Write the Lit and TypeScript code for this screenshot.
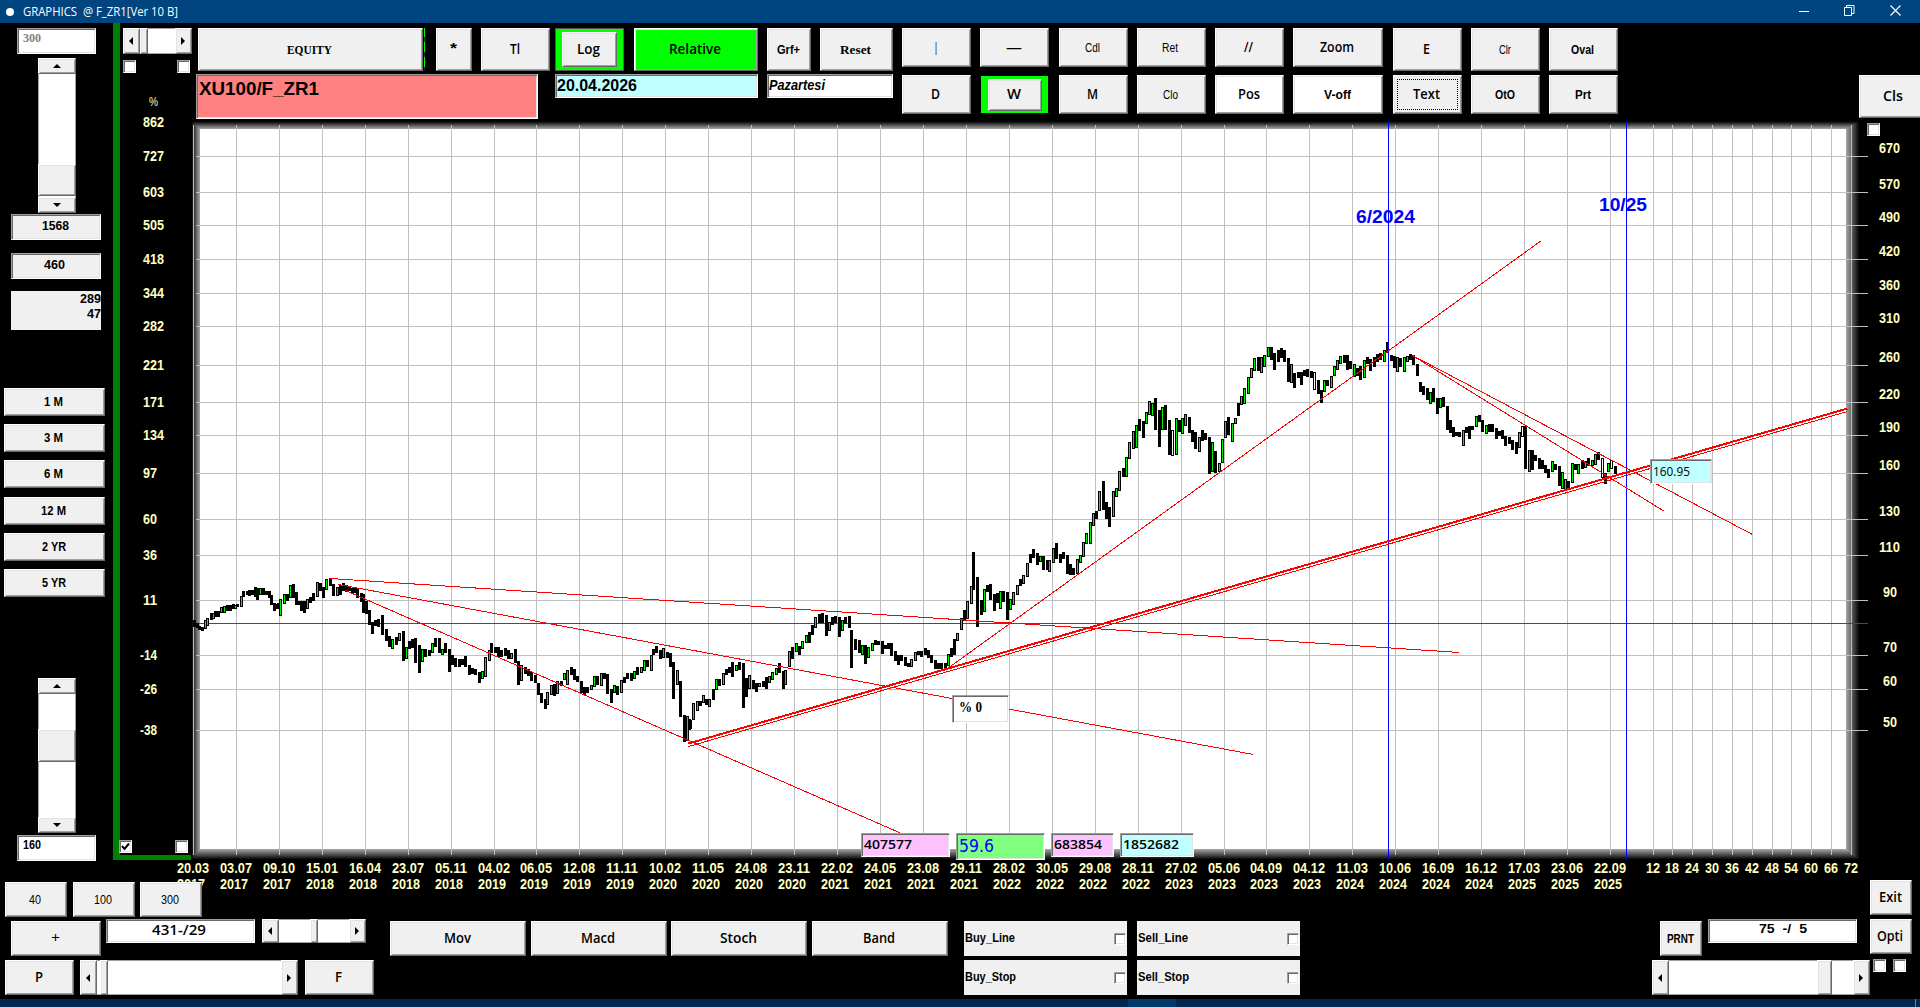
import { LitElement, html, svg, css } from "lit";
import { customElement, property } from "lit/decorators.js";

type Font = "sans" | "ui" | "serif" | "wide";

/** Label whose text is set to an exact width, as the fixed-size form fonts do. */
const label = (text: string, width: number, size = 14, font: Font = "ui", weight = 600, extra = "") => html`
  <svg class="lbl ${font} ${extra}" width=${width} height=${Math.round(size * 1.2)}>
    <text x="0" y=${Math.round(size * 0.95)} font-size=${size} font-weight=${weight}
      textLength=${width} lengthAdjust="spacingAndGlyphs" xml:space="preserve">${text}</text>
  </svg>`;

const base = css`
  * { box-sizing: border-box; }
  .lbl { display: block; flex: none; overflow: visible; fill: currentColor; }
  .sans { font-family: "Liberation Sans", Arial, sans-serif; }
  .ui { font-family: "Open Sans", "Noto Sans", sans-serif; }
  .wide { font-family: "DejaVu Sans", sans-serif; }
  .serif { font-family: "Liberation Serif", serif; }
  .italic { font-style: italic; }
  .raised {
    background: #f0f0f0;
    border: 1px solid; border-color: #fff #696969 #696969 #fff;
    box-shadow: inset 1px 1px #e3e3e3, inset -1px -1px #a0a0a0;
  }
  .sunken {
    background: #fff;
    border: 1px solid; border-color: #a0a0a0 #fff #fff #a0a0a0;
    box-shadow: inset 1px 1px #696969, inset -1px -1px #e3e3e3;
  }
`;

@customElement("scroll-bar")
class ScrollBar extends LitElement {
  @property({ type: Boolean, reflect: true }) vertical = false;
  @property({ type: Number }) before = 0;
  @property({ type: Number }) thumb = 8;
  static styles = [base, css`
    :host { display: flex; background: #fff; flex: none; box-sizing: border-box; box-shadow: inset 0 1px #a0a0a0, inset 0 -1px #a0a0a0; }
    :host([vertical]) { flex-direction: column; box-shadow: inset 1px 0 #a0a0a0, inset -1px 0 #a0a0a0; }
    .arrow { flex: 0 0 17px; display: flex; align-items: center; justify-content: center; padding-right: 1px; }
    :host([vertical]) .arrow { flex-basis: 16px; }
    .gap { flex: none; }
    .fill { flex: 1; }
    .thumb { flex: none; }
    .arrow svg { display: block; }
  `];
  render() {
    const v = this.vertical;
    const size = (n: number) => `flex-basis:${n}px`;
    const a = v ? "M4 0L8 4H0Z" : "M4 0V8L0 4Z";
    const b = v ? "M0 0H8L4 4Z" : "M0 0V8L4 4Z";
    const arrow = (d: string) => html`<div class="arrow raised">
      <svg width=${v ? 8 : 4} height=${v ? 4 : 8}><path d=${d} fill="#000"/></svg></div>`;
    return html`${arrow(a)}<div class="gap" style=${size(this.before)}></div>
      <div class="thumb raised" style=${size(this.thumb)}></div><div class="fill"></div>${arrow(b)}`;
  }
}

/* Weekly candles: x, high, low in thirds of a pixel from the segment origin; "g" marks a rising week, "w" a hollow one. */
const SEGMENTS: [number, number, string][] = [
  [190, 570, "12,150,170 20,158,174 28,168,180 36,170,182 44,150,176g 52,144,168g 62,128,150 70,130,146g 76,122,142 84,124,142 92,112,130g 102,108,128g 110,106,124 120,104,124 130,102,118 134,104,118g 142,102,110 152,78,110g 160,64,80 170,62,74 178,60,78 186,60,74 194,52,80 202,54,90 211,55,76g 220,54,74 228,62,76 238,64,84 244,74,106 252,98,122 260,102,116 264,98,112 271,86,138g 281,72,102g 290,72,94 300,46,84g 310,42,84 318,66,104 328,94,106 334,92,122 343,94,130 350,88,118g 360,82,98 370,68,94 380,36,80g 390,40,62 400,52,84 409,26,60g 420,24,48 430,42,78 440,50,78g 450,46,76 460,40,62 468,44,66 478,48,64 486,54,70 496,54,70 502,56,84 512,70,96 519,72,128 529,92,132 538,120,164 546,156,192 556,150,168 564,148,172 576,134,194 587,178,214 597,198,230 607,206,236g 617,202,224 628,188,212g 638,182,272 647,230,266g 658,212,238 667,208,234 676,204,278 686,226,308 696,236,276g 706,238,262 716,240,258 726,218,250g 736,204,232 746,204,250 756,236,256g 766,220,250 776,236,306 786,256,284 796,264,290 806,268,292 816,266,284 826,258,290 836,284,316 846,294,312 856,298,316 866,306,340 876,304,326g 886,260,320g 896,240,272g 904,218,248 914,232,250 924,230,262 934,240,260 944,234,258 954,240,266 964,250,268g 974,236,280 984,272,346 994,286,334g 1004,290,312 1014,296,318 1024,306,332 1034,314,338 1044,338,376 1054,370,398 1064,388,416 1072,366,404g 1082,344,374g 1092,342,378 1102,334,372g 1112,334,348 1122,310,330g 1132,300,344g 1142,292,314 1152,298,330 1162,318,336 1172,332,370 1182,352,376 1192,350,370 1202,344,360g 1212,318,350g 1222,318,344 1232,310,348g 1242,308,326 1252,312,372 1262,356,398 1272,344,368g 1282,348,374 1292,330,370g 1302,322,340 1312,308,326 1322,308,334 1332,302,326g 1342,292,314 1352,290,308g 1362,270,302g 1372,270,290 1382,254,304g 1390,236,256 1399,228,250 1410,240,266 1420,234,264g 1430,246,264 1440,250,290 1450,276,386 1460,300,344g 1470,334,440 1481,434,516 1490,438,512g 1498,448,480g"],
  [680, 390, "30,990,1018 40,940,990g 50,932,964g 60,934,948 70,914,938g 78,926,944 88,926,950g 98,896,930 108,866,900g 118,866,888 128,848,884g 138,838,856 148,830,850 157,816,860 168,824,842g 178,816,840 188,818,954 197,864,920 208,856,896g 218,870,898 227,880,906 238,878,892g 248,872,890 257,862,896 267,858,880g 277,846,870g 287,834,856g 297,820,848 308,842,896 316,840,886g 326,782,830g 337,770,806 347,758,786g 357,768,796 367,754,776g 377,734,758g 386,726,760 396,706,734 406,680,714g 416,672,698 427,670,698 437,674,738 446,696,722g 456,682,704 466,678,700 476,682,740 486,690,722g 496,682,702 506,678,714 514,720,834 526,748,780 536,750,790 546,766,794g 555,764,822 565,772,804g 575,758,782g 585,750,766 595,752,766 605,754,792 615,766,778 625,760,778 634,760,798 644,784,814 654,796,824 664,794,812 674,802,828 684,820,832 694,806,832g 704,786,812g 714,784,796 724,782,800 734,774,794 744,780,804 754,794,820 764,810,836 774,818,838 784,820,836 794,820,834 803,792,828g 812,774,800 822,748,794 832,728,754g 842,684,720g 852,660,692 862,632,686g 872,588,642g 880,486,600 892,560,712 902,630,676 911,598,666g 921,584,606 931,582,630 941,612,664 951,610,638 960,604,656g 970,604,636 980,606,690 990,626,660g 1000,606,646g 1010,586,614g 1020,568,588 1030,554,582g 1040,520,560g 1050,492,520 1060,478,504 1070,490,524 1080,498,516g 1090,498,540 1100,510,540 1108,510,546g 1120,474,518g 1129,458,508 1139,492,518 1149,486,508 1160,496,552 1170,522,554 1180,534,556 1190,508,552g 1200,496,518g 1208,456,500g 1219,430,462g 1229,396,462g 1238,368,408g 1248,362,388 1258,304,364g 1268,272,360 1278,336,386 1288,350,410 1298,304,382g 1307,294,322g 1318,242,302g 1328,234,262 1338,202,262g 1348,156,208g 1358,124,176g 1367,104,174g 1378,88,122 1388,94,144 1397,66,102g 1406,34,76g 1416,38,78g 1426,24,120 1436,60,170 1447,52,120g 1456,44,120 1466,90,194 1477,120,198w 1487,84,194g 1496,90,126"],
  [1170, 335, "36,248,298g 46,236,272g 56,246,294 66,286,320 76,292,342 86,306,352g 95,286,318 106,294,314 116,306,418 126,322,412g 136,348,414 146,384,412g 155,312,384g 165,258,310g 175,246,300 185,264,322g 194,248,268g 205,204,242 214,184,210g 223,160,206g 233,126,178g 243,98,130g 253,68,108g 263,66,108 274,66,114g 283,60,96g 293,36,66g 303,36,76 313,54,104 323,44,82 332,38,68 343,44,82 353,70,140 362,86,144g 373,114,160 383,110,130 392,112,150 402,104,124 412,102,126 422,108,128 432,112,166w 443,134,176 452,166,204 461,136,172g 471,134,152 482,122,158g 491,92,124g 501,76,104g 511,62,86g 521,60,84 531,60,104 541,78,102 551,88,126g 561,100,124 571,92,136 581,76,130g 591,66,86 601,72,108 611,66,96 621,56,82 631,54,74 641,44,82g 650,20,54 662,60,78 671,62,98 680,66,112g 690,68,96 701,66,112g 711,64,82g 720,58,76 730,60,90 740,88,124 750,140,172 760,154,180 770,160,196 780,172,206g 790,158,202 800,188,236 810,190,218g 820,186,216 830,212,284 840,256,294 849,276,306 859,290,304 868,290,306 878,284,332g 887,276,294 897,272,312 907,272,286 918,244,276g 927,240,262 937,254,290 947,270,296g 957,268,290 967,266,290 977,278,312 987,288,304 996,284,312 1006,302,332 1017,306,328 1027,316,344 1037,320,358 1046,290,338g 1056,272,306w 1066,274,402 1076,346,410g 1086,346,404 1096,360,378 1106,370,402 1116,374,402 1125,390,414 1135,402,428 1146,378,410g 1156,386,406 1166,394,452 1175,412,462g 1185,432,464g 1195,438,464 1205,384,444g 1215,386,404 1225,388,418g 1235,376,402 1245,378,398g 1255,370,392 1265,374,394g 1275,358,390g 1285,352,376 1295,370,428w 1304,414,446 1314,384,412g 1324,374,402w 1334,392,418"],
];
const CANDLES = SEGMENTS.flatMap(([ox, oy, data]) => data.split(" ").map((c) => {
  const kind = /[gw]$/.test(c) ? c.slice(-1) : "";
  const [x, h, l] = c.replace(/[gw]$/, "").split(",").map(Number);
  return { x: Math.round(ox + x / 3) - 1, top: Math.round(oy + h / 3), bottom: Math.round(oy + l / 3), kind };
}));

const DATES = "20.03.2017 03.07.2017 09.10.2017 15.01.2018 16.04.2018 23.07.2018 05.11.2018 04.02.2019 06.05.2019 12.08.2019 11.11.2019 10.02.2020 11.05.2020 24.08.2020 23.11.2020 22.02.2021 24.05.2021 23.08.2021 29.11.2021 28.02.2022 30.05.2022 29.08.2022 28.11.2022 27.02.2023 05.06.2023 04.09.2023 04.12.2023 11.03.2024 10.06.2024 16.09.2024 16.12.2024 17.03.2025 23.06.2025 22.09.2025".split(" ");
const DATE_X = DATES.map((_, i) => Math.round(i < 8 ? 193 + i * 43 : 536 + (i - 8) * 42.97));
const MONTH_X = [1653, 1672, 1692, 1712, 1732, 1752, 1772, 1791, 1811, 1831, 1851];
const ROWS: [number, string, string][] = [
  [156, "727", "670"], [192, "603", "570"], [225, "505", "490"], [259, "418", "420"], [293, "344", "360"],
  [326, "282", "310"], [365, "221", "260"], [402, "171", "220"], [435, "134", "190"], [473, "97", "160"],
  [519, "60", "130"], [555, "36", "110"], [600, "11", "90"], [655, "-14", "70"], [689, "-26", "60"], [730, "-38", "50"],
];
const TRENDS: [number, number, number, number, number][] = [
  [330, 578, 1459, 652, 1], [338, 584, 1253, 754, 1], [345, 590, 901, 833, 1], [947, 668, 1541, 240, 1],
  [688, 743, 1847, 408, 2], [688, 746, 1847, 411, 1], [1412, 355, 1752, 534, 1], [1412, 355, 1664, 511, 1],
];

@customElement("price-chart")
class PriceChart extends LitElement {
  static styles = [base, css`
    :host { display: block; position: relative; width: 1800px; height: 759px; }
    .plot { display: block; overflow: visible; font-family: "Liberation Sans", Arial, sans-serif; }
    .axis { fill: #ffffc0; font-size: 14px; font-weight: 600; }
    .note { fill: #00f; font-size: 18.5px; font-weight: 700; }
    .crisp { shape-rendering: crispEdges; }
    .over { position: absolute; color: #000; padding: 3px 0 0 2px; }
    .price { left: 1530px; top: 338px; width: 62px; height: 25px; background: #c0ffff; padding: 4px 0 0 2px; border-right-color: #e3e3e3; border-bottom-color: #fff; }
    .pct { left: 832px; top: 574px; width: 57px; height: 28px; padding: 2px 0 0 6px; }
    .b1 { left: 741px; top: 712px; width: 89px; height: 24px; background: #ffc0ff; }
    .b2 { left: 836px; top: 712px; width: 89px; height: 27px; background: #80ff80; color: #00f; padding-top: 2px; }
    .b3 { left: 931px; top: 712px; width: 63px; height: 24px; background: #ffc0ff; }
    .b4 { left: 1000px; top: 712px; width: 74px; height: 24px; background: #c0ffff; }
    .check { position: absolute; width: 13px; height: 13px; }
    .c1 { left: -1px; top: 719px; }
    .c2 { left: 55px; top: 719px; }
    .c3 { left: 1747px; top: 2px; }
  `];
  private txt(t: string, x: number, y: number, w: number, cls = "axis") {
    return svg`<text class=${cls} x=${x} y=${y} textLength=${w} lengthAdjust="spacingAndGlyphs">${t}</text>`;
  }
  private frame() {
    const n = 11;
    return Array.from({ length: n }, (_, i) => {
      const c = Math.round((i / (n - 1)) * 160);
      const k = i / n;
      const l = 191 + 9 * k, t = 121 + 8 * k, r = 1860 - 14 * k, b = 860 - 11 * k;
      return svg`<rect x=${l} y=${t} width=${r - l} height=${b - t} fill="rgb(${c},${c},${c})"/>`;
    });
  }
  render() {
    return html`<svg class="plot" width="1800" height="759" viewBox="120 121 1800 759">
      ${this.frame()}
      <g class="crisp">
        <rect x="200" y="129" width="1646" height="720" fill="#fff"/>
        <rect x="193" y="125" width="1" height="730" fill="#c0c0c0"/>
        ${[...DATE_X.slice(1), ...MONTH_X].map((x) => svg`<rect x=${x} y="125" width="1" height="730" fill="#c0c0c0"/>`)}
        ${ROWS.map(([y]) => svg`<rect x="196" y=${y} width="1672" height="1" fill="#c0c0c0"/>`)}
        <rect x="196" y="623" width="1672" height="1" fill="#f00"/>
        ${CANDLES.map((c) => {
          const h = Math.max(2, c.bottom - c.top);
          return svg`<rect x=${c.x} y=${c.top} width="3" height=${h} fill="#000"/>${c.kind && h > 2
            ? svg`<rect x=${c.x + 1} y=${c.top + 1} width="1" height=${h - 2} fill=${c.kind === "g" ? "#00f000" : "#fff"}/>` : ""}`;
        })}
        <rect x="1388" y="121" width="1" height="739" fill="#00f"/>
        <rect x="1626" y="121" width="1" height="739" fill="#00f"/>
        ${TRENDS.map(([a, b, c, d, w]) => svg`<line x1=${a + 0.5} y1=${b + 0.5} x2=${c + 0.5} y2=${d + 0.5} stroke="#f00" stroke-width=${w}/>`)}
      </g>
      ${this.txt("862", 143, 127, 21)}
      ${ROWS.map(([y, l, r]) => svg`
        ${this.txt(l, l[0] === "-" ? 140 : 143, y + 5, l[0] === "-" ? 17 : l.length * 7)}
        ${this.txt(r, r.length === 3 ? 1879 : 1883, y - 3, r.length * 7)}`)}
      ${DATES.map((d, i) => svg`
        ${this.txt(d.slice(0, 5), DATE_X[i] - 16, 873, 32)}
        ${this.txt(d.slice(6), DATE_X[i] - 16, 889, 28)}`)}
      ${MONTH_X.map((x, i) => this.txt(String(12 + i * 6), x - 7, 873, 14))}
      ${this.txt("6/2024", 1356, 223, 59, "note")}
      ${this.txt("10/25", 1599, 211, 48, "note")}
    </svg>
    <div class="over sunken price">${label("160.95", 37, 13, "ui", 400)}</div>
    <div class="over sunken pct">${label("% 0", 23, 15, "serif", 700)}</div>
    <div class="over sunken b1">${label("407577", 48, 13, "ui", 600)}</div>
    <div class="over sunken b2">${label("59.6", 35, 17, "wide", 400)}</div>
    <div class="over sunken b3">${label("683854", 48, 13, "ui", 600)}</div>
    <div class="over sunken b4">${label("1852682", 56, 13, "ui", 600)}</div>
    <div class="check sunken c1"><svg class="lbl" width="11" height="11"><path d="M2 5L4.5 8L9 2.5" fill="none" stroke="#000" stroke-width="2"/></svg></div>
    <div class="check sunken c2"></div>
    <div class="check sunken c3"></div>`;
  }
}

@customElement("app-root")
class AppRoot extends LitElement {
  static styles = [base, css`
    :host { display: flex; flex-direction: column; width: 1920px; height: 1007px; background: #000; overflow: hidden; color: #000; }
    .title { height: 23px; background: #004480; color: #fff; display: flex; align-items: center; padding: 0 19px 0 6px; flex: none; }
    .dot { width: 8px; height: 8px; border-radius: 50%; background: #fff; margin-right: 9px; }
    .wins { margin-left: auto; display: flex; gap: 35px; align-items: center; margin-top: -3px; }
    .wins svg { display: block; }
    .upper { display: flex; height: 857px; flex: none; }
    .btn { display: flex; align-items: center; justify-content: center; flex: none; padding-right: 2px; }
    .field { padding: 3px; flex: none; }
    .side { width: 113px; flex: none; display: flex; flex-direction: column; align-items: flex-start; padding-top: 5px; }
    .side > .num { width: 79px; height: 26px; margin-left: 17px; padding: 2px 0 0 5px; }
    .side > .num.low { margin-top: 2px; }
    .side > .read { width: 90px; height: 26px; margin: 1px 0 0 11px; background: #f0f0f0; display: flex; justify-content: center; padding: 3px 1px 0 0; }
    .side > .read.second { margin-top: 13px; padding-right: 3px; }
    .pair { width: 90px; height: 39px; background: #f0f0f0; margin: 12px 0 0 11px; display: flex; flex-direction: column; align-items: flex-end; }
    .pair .lbl + .lbl { margin-top: -1px; }
    .side scroll-bar { width: 38px; height: 155px; margin: 4px 0 0 38px; }
    .side scroll-bar.lowbar { margin-top: 81px; }
    .periods { display: flex; flex-direction: column; gap: 8.2px; margin: 58px 0 0 4px; }
    .periods .btn { width: 101px; height: 28px; }
    .gray { color: #808080; }
    .rail { width: 7px; height: 837px; background: #008000; flex: none; }
    .foot { height: 5px; width: 78px; background: #008000; flex: none; margin: -25px 0 0 -7px; }
    .main { width: 1800px; flex: none; display: flex; flex-direction: column; }
    .tools { height: 98px; display: flex; padding: 5px 0 0 3px; flex: none; }
    .corner { width: 73px; display: flex; flex-direction: column; gap: 6px; flex: none; }
    .corner scroll-bar { width: 69px; height: 26px; }
    .boxes { display: flex; justify-content: space-between; width: 67px; }
    .box { width: 13px; height: 13px; flex: none; }
    .pctsign { color: #ffffc0; margin: 16px 0 0 26px; }
    .rows { display: flex; flex-direction: column; gap: 3px; flex: none; }
    .row { display: flex; align-items: flex-start; }
    .h43 .btn { height: 43px; }
    .ticker { width: 342px; height: 45px; background: #ff8080; padding: 2px 0 0 2px; margin-right: 17px; }
    .date { width: 203px; height: 24px; background: #c0ffff; padding: 1px; margin-right: 9px; }
    .day { width: 126px; height: 24px; padding: 2px 1px; }
    .pad { display: grid; grid-template-columns: 69px 69px 69px 69px 69px 90px 69px 69px 69px; column-gap: 9.3px; grid-template-rows: 43px 39px; row-gap: 4px; margin-left: 9px; flex: none; height: 86px; }
    .pad .btn { height: 39px; }
    .pad .btn.tall { height: 43px; }
    .white { background: #fff; }
    .green { background: #0f0; }
    .ring { background: #0f0; display: flex; align-items: center; justify-content: center; flex: none; border: 1px solid #555; }
    .ring > .btn.btn { width: 55px; height: 35px; }
    .ring.w { margin: 1px; border: 0; height: 37px; }
    .ring.w > .btn.btn { height: 32px; width: 54px; }
    .focus { outline: 1px dotted #000; outline-offset: -5px; }
    .star .lbl { margin-top: -3px; }
    .noise { width: 2px; height: 42px; background: linear-gradient(90deg, #000 50%, transparent 50%), repeating-linear-gradient(#0f0 0 9px, #234 9px 14px, #0f0 14px 15px); flex: none; }
    .cls { width: 80px; height: 43px; margin-top: 47px; justify-content: flex-start; padding-left: 23px; }
    .clip { margin-left: auto; width: 61px; overflow: hidden; flex: none; height: 93px; display: flex; }
    .lower { height: 119px; flex: none; display: flex; position: relative; }
    .col { display: flex; flex-direction: column; flex: none; }
    .line { display: flex; }
    .status { height: 8px; background: #002850; display: flex; flex: none; }
    .status i { display: block; width: 48px; height: 8px; background: #003a68; margin-left: 1128px; }
    .status b { display: block; width: 1px; height: 8px; background: #6688a0; margin-left: 739px; }
    .opts { display: grid; grid-template-columns: 163px 163px; grid-template-rows: 35px 35px; gap: 4px 10px; margin: 41px 0 0 16px; }
    .opt { background: #f0f0f0; display: flex; align-items: center; justify-content: space-between; padding: 0 1px; }
    .opt .lbl { margin-top: -1px; }
    .opt .box { width: 12px; height: 12px; }
  `];
  private b(t: string, w: number, tw: number, size = 14, font: Font = "ui", weight = 600, cls = "") {
    return html`<div class="btn raised ${cls}" style="width:${w}px">${label(t, tw, size, font, weight)}</div>`;
  }
  render() {
    const b = this.b.bind(this);
    return html`
    <div class="title"><div class="dot"></div>${label("GRAPHICS  @ F_ZR1[Ver 10 B]", 155, 12, "ui", 400)}
      <div class="wins">
        <svg width="10" height="11"><path d="M0 6.5H10" stroke="#fff"/></svg>
        <svg width="11" height="11" fill="none" stroke="#fff"><path d="M.5 2.5H7.5V10.5H.5ZM2.5 2.5V.5H10V8.5H7.5"/></svg>
        <svg width="11" height="11" stroke="#fff" stroke-width="1.2"><path d="M.5 .5L10.5 10.5M10.5 .5L.5 10.5"/></svg>
      </div></div>
    <div class="upper">
      <div class="side">
        <div class="field sunken num gray">${label("300", 18, 12, "serif", 700)}</div>
        <scroll-bar vertical .before=${90} .thumb=${32}></scroll-bar>
        <div class="field sunken read">${label("1568", 27, 12.5, "sans", 700)}</div>
        <div class="field sunken read second">${label("460", 21, 13, "sans", 700)}</div>
        <div class="pair">${label("289", 21, 13, "sans", 600)}${label("47", 14, 13, "sans", 600)}</div>
        <div class="periods">
          ${([["1 M", 19], ["3 M", 19], ["6 M", 19], ["12 M", 25], ["2 YR", 24], ["5 YR", 24]] as [string, number][])
            .map(([t, w]) => html`<div class="btn raised">${label(t, w, 12, "sans", 700)}</div>`)}
        </div>
        <scroll-bar class="lowbar" vertical .before=${35} .thumb=${33}></scroll-bar>
        <div class="field sunken num low">${label("160", 18, 12, "sans", 700)}</div>
      </div>
      <div class="rail"></div>
      <div class="main">
        <div class="tools">
          <div class="corner">
            <scroll-bar .before=${0} .thumb=${8}></scroll-bar>
            <div class="boxes"><div class="box sunken"></div><div class="box sunken"></div></div>
            <div class="pctsign">${label("%", 9, 12, "sans", 400)}</div>
          </div>
          <div class="rows">
            <div class="row h43" style="padding-left:2px">
              ${b("EQUITY", 225, 45, 13, "serif", 700)}<div class="noise"></div>
              <div style="width:11px"></div>${b("*", 36, 7, 15, "sans", 700, "star")}
              <div style="width:9px"></div>${b("Tl", 69, 10)}
              <div style="width:5px"></div><div class="ring" style="width:69px;height:43px">${b("Log", 55, 23)}</div>
              <div style="width:10px"></div>${b("Relative", 124, 52, 14, "ui", 600, "green")}
              <div style="width:9px"></div>${b("Grf+", 44, 23, 12, "sans", 700)}
              <div style="width:9px"></div>${b("Reset", 73, 31, 13, "serif", 700)}
            </div>
            <div class="row">
              <div class="sunken ticker">${label("XU100/F_ZR1", 120, 19, "sans", 700)}</div>
              <div class="sunken date">${label("20.04.2026", 80, 16, "sans", 600)}</div>
              <div class="sunken day">${label("Pazartesi", 56, 14, "sans", 600, "italic")}</div>
            </div>
          </div>
          <div class="pad">
            ${b("|", 69, 4, 13)}${b("—", 69, 16, 14)}${b("Cdl", 69, 15, 12, "sans", 400)}${b("Ret", 69, 16, 12, "sans", 400)}
            ${b("//", 69, 9, 14)}${b("Zoom", 90, 34)}${b("E", 69, 7, 14, "ui", 600, "tall")}
            ${b("Clr", 69, 12, 12, "sans", 400, "tall")}${b("Oval", 69, 23, 12, "sans", 700, "tall")}
            ${b("D", 69, 9)}<div class="ring w">${b("W", 54, 14)}</div>${b("M", 69, 11)}${b("Clo", 69, 15, 12, "sans", 400)}
            ${b("Pos", 69, 22, 14, "ui", 600, "white")}${b("V-off", 90, 27, 12, "sans", 700, "white")}
            ${b("Text", 69, 27, 14, "ui", 600, "focus")}${b("OtO", 69, 20, 12, "sans", 700)}${b("Prt", 69, 16, 12, "sans", 700)}
          </div>
          <div class="clip"><div class="btn raised cls">${label("Cls", 20)}</div></div>
        </div>
        <price-chart></price-chart>
        <div class="foot"></div>
      </div>
    </div>
    <div class="lower">
      <div class="col" style="padding:2px 0 0 5px;gap:4px;width:374px">
        <div class="line" style="gap:5.5px;height:35px">${b("40", 62, 12, 12, "sans", 400)}${b("100", 62, 18, 12, "sans", 400)}${b("300", 62, 18, 12, "sans", 400)}</div>
        <div class="line" style="height:35px;padding-left:6px">${b("+", 90, 9, 14, "ui", 400)}
          <div class="sunken" style="width:149px;height:24px;margin:-2px 7px 0 5px;display:flex;justify-content:center;padding:2px 3px 0 0">${label("431-/29", 54, 13.5, "ui", 600)}</div>
          <scroll-bar style="width:104px;height:24px;margin-top:-2px" .before=${31} .thumb=${8}></scroll-bar></div>
        <div class="line" style="height:35px">${b("P", 69, 8)}<scroll-bar style="width:218px;margin:0 7px 0 6px" .before=${3} .thumb=${8}></scroll-bar>${b("F", 69, 7)}</div>
      </div>
      <div class="line" style="height:35px;gap:4.7px;margin:41px 0 0 16px;width:558px">
        ${b("Mov", 136, 27)}${b("Macd", 136, 34)}${b("Stoch", 136, 37)}${b("Band", 136, 32)}
      </div>
      <div class="opts">
        ${([["Buy_Line", 50], ["Sell_Line", 50], ["Buy_Stop", 51], ["Sell_Stop", 51]] as [string, number][])
          .map(([t, w]) => html`<div class="opt">${label(t, w, 12, "sans", 700)}<div class="box sunken"></div></div>`)}
      </div>
      <div class="col" style="margin:39px 0 0 352px;width:218px">
        <div class="line" style="padding-left:8px;height:41px">
          <div class="line" style="height:35px;margin-top:2px">${b("PRNT", 42, 27, 12, "sans", 700)}</div>
          <div class="sunken" style="width:149px;height:24px;margin-left:6px;display:flex;justify-content:center;padding-top:2px">${label("75  -/  5", 48, 12, "sans", 700)}</div>
        </div>
        <scroll-bar style="height:35px" .before=${148} .thumb=${15}></scroll-bar>
      </div>
      <div class="col" style="gap:4px">
        <div class="line" style="height:35px">${b("Exit", 42, 23)}</div>
        <div class="line" style="height:35px">${b("Opti", 42, 26)}</div>
        <div class="line" style="gap:7px;padding-left:3px;margin-top:1px"><div class="box sunken"></div><div class="box sunken"></div></div>
      </div>
    </div>
    <div class="status"><i></i><b></b></div>`;
  }
}
